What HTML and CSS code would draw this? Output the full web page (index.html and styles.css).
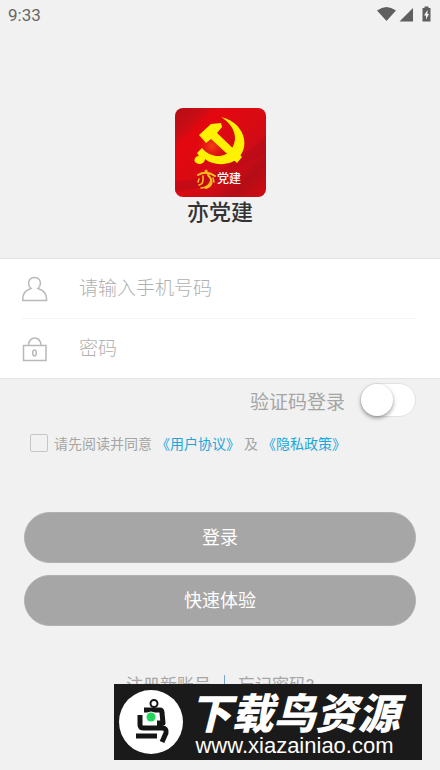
FILE: index.html
```html
<!DOCTYPE html>
<html lang="zh-CN">
<head>
  <meta charset="UTF-8">
  <meta name="viewport" content="width=device-width, initial-scale=1.0">
  <title>亦党建</title>
  <link rel="stylesheet" href="styles.css">
</head>
<body>
  <header class="status-bar">
    <span class="status-time">9:33</span>
    <svg class="status-icons" width="58" height="20" viewBox="0 0 58 20" fill="#5f5f5f" aria-hidden="true">
      <path d="M0 5.500Q9.500 -1.500 19 5.500L9.500 16Z"/>
      <path d="M22.500 16.500L36 3V16.500Z"/>
      <path d="M45.500 3H47.500V1.500H51.500V3H53.500V16.500H45.500Z"/>
      <path fill="#f1f1f1" d="M50.500 5L47 10.500H49V14.500L52 9H50.500Z"/>
    </svg>
  </header>

  <main>
    <div class="brand">
      <svg class="brand-logo" width="91" height="89" viewBox="0 0 91 89" aria-hidden="true">
        <defs>
          <linearGradient id="flag" x1="0" y1="0" x2="1" y2="1">
            <stop offset="0" stop-color="#b70c15"/>
            <stop offset=".16" stop-color="#c80d16"/>
            <stop offset=".24" stop-color="#e5070f"/>
            <stop offset=".5" stop-color="#d90a13"/>
            <stop offset=".68" stop-color="#cc0c16"/>
            <stop offset=".8" stop-color="#b30d17"/>
            <stop offset="1" stop-color="#d10a13"/>
          </linearGradient>
          <radialGradient id="glow">
            <stop offset="0" stop-color="#ff6a18" stop-opacity=".6"/>
            <stop offset="1" stop-color="#e5070f" stop-opacity="0"/>
          </radialGradient>
        </defs>
        <rect width="91" height="89" rx="8" fill="url(#flag)"/>
        <path d="M0 73Q32 73 57 55T91 28V45Q72 53 54 66T0 84Z" fill="#a90c18" opacity=".4"/>
        <circle cx="37" cy="38" r="17" fill="url(#glow)"/>
        <g fill="#fff200">
          <path d="M46 9C74 16 76 46 57 54C47 58 36 56 30 51C30 54 27 56 24 56C17 55 19 48 24 48L22 45L27 40C34 49 48 51 55 43C65 31 59 17 46 9Z"/>
          <path d="M24 27L36 16L46 15L47 19L42 25L67 49L62 55L36 31L31 35Z"/>
        </g>
        <g fill="none" stroke="#ffc21c" stroke-linecap="round">
          <path stroke-width="2" d="M23 67Q31 62 40 68M33 67Q41 76 31 80"/>
          <path stroke-width="1.500" d="M28 68V72Q28 76 24 77M24 71L23 74M38 70L39 74M26 80Q34 80 36 72"/>
          <circle cx="31" cy="63" r="1" fill="#ffc21c"/>
        </g>
        <text class="logo-text" x="42" y="75">党建</text>
      </svg>
      <h1 class="brand-name">亦党建</h1>
    </div>

    <form>
      <div class="fields">
        <div class="field">
          <label for="phone" aria-label="手机号码">
            <svg width="26" height="26" viewBox="0 0 26 26">
              <path d="M9 12.500C5 9 6 1.500 12.500 1.500S20 9 16 12.500C21 14 25 18 24.500 24.500H.800C.300 18 4 14 9 12.500Z"/>
            </svg>
          </label>
          <input type="tel" id="phone" placeholder="请输入手机号码">
        </div>
        <div class="field">
          <label for="password" aria-label="密码">
            <svg width="26" height="26" viewBox="0 0 26 26">
              <path d="M1.500 9.500H24V24.500H1.500ZM6.500 9.500C6.500 -.500 19 -.500 19 9.500"/>
              <ellipse cx="12.500" cy="17" rx="1.800" ry="3"/>
            </svg>
          </label>
          <input type="password" id="password" placeholder="密码">
        </div>
      </div>

      <div class="code-login">
        <label for="codeLogin">验证码登录</label>
        <input type="checkbox" role="switch" class="switch" id="codeLogin">
      </div>

      <div class="agreement">
        <input type="checkbox" class="agree-box" id="agree">
        <p><label for="agree">请先阅读并同意</label><a href="#">《用户协议》</a>及<a href="#">《隐私政策》</a></p>
      </div>

      <div class="actions">
        <button type="submit">登录</button>
        <button type="button">快速体验</button>
      </div>
    </form>

    <nav class="links">
      <a href="#">注册新账号</a>
      <span class="separator"></span>
      <a href="#">忘记密码?</a>
    </nav>
  </main>

  <aside class="site-banner">
    <svg width="64" height="64" viewBox="0 0 64 64" aria-hidden="true">
      <circle cx="32" cy="32" r="32" fill="#fff"/>
      <g fill="none" stroke="#151515" stroke-linejoin="round">
        <circle cx="35" cy="13.500" r="3.500" stroke-width="2"/>
        <path stroke-width="5" d="M25 20H41Q43 20 43 23L44 33H38M21 25V35Q21 38 25 38H43Q48 38 47 43L43 52M17 46H38"/>
      </g>
      <circle cx="32" cy="27" r="5.500" fill="#fff"/>
      <circle cx="32" cy="27" r="4.500" fill="#20d85a"/>
    </svg>
    <div class="banner-text">
      <strong>下载鸟资源</strong>
      <span>www.xiazainiao.com</span>
    </div>
  </aside>
</body>
</html>
```
FILE: styles.css
```css
* {
  margin: 0;
  padding: 0;
  box-sizing: border-box;
}

body {
  position: relative;
  min-height: 100vh;
  background: #f1f1f1;
  color: #a5a5a5;
  font-family: Roboto, "Noto Sans CJK SC", sans-serif;
  font-size: 14px;
}

a {
  color: inherit;
  text-decoration: none;
}

svg {
  display: block;
  flex: none;
}

.status-bar {
  height: 30px;
  padding: 0 5px 0 8px;
  display: flex;
  align-items: center;
  justify-content: space-between;
}

.status-time {
  color: #666;
  font-size: 17px;
}

.brand {
  padding-top: 78px;
  height: 228px;
  display: flex;
  flex-direction: column;
  align-items: center;
}

.logo-text {
  fill: #fff;
  font-size: 12px;
  font-weight: 500;
}

.brand-name {
  color: #333;
  font-size: 22px;
  line-height: 32px;
  font-weight: 500;
}

.fields {
  padding: 0 24px 0 22px;
  background: #fff;
  border-top: 1px solid #e2e5e8;
  border-bottom: 1px solid #e5e5e5;
}

.field {
  height: 59px;
  display: flex;
  align-items: center;
  gap: 31px;
}

.field + .field {
  height: 60px;
  border-top: 1px solid #f0f4f5;
}

.field svg {
  fill: none;
  stroke: #b9b9b9;
  stroke-width: 1.5;
}

.field input {
  flex: 1;
  min-width: 0;
  height: 40px;
  border: none;
  outline: none;
  background: transparent;
  color: #666;
  font-family: inherit;
  font-size: 19px;
  font-weight: 300;
}

.field input::placeholder {
  color: #b0b0b0;
}

.code-login {
  height: 42px;
  padding: 0 24px;
  display: flex;
  align-items: center;
  justify-content: flex-end;
  gap: 15px;
  font-size: 19px;
}

.switch {
  appearance: none;
  width: 56px;
  height: 34px;
  border: 1px solid #e2e2e2;
  border-radius: 17px;
  background: #fff;
}

.switch::before {
  content: "";
  display: block;
  width: 32px;
  height: 32px;
  border-radius: 50%;
  background: #fff;
  box-shadow: 0 2px 4px rgba(0, 0, 0, 0.4);
}

.switch:checked::before {
  margin-left: auto;
}

.agreement {
  height: 44px;
  padding: 0 30px;
  display: flex;
  align-items: center;
  gap: 6px;
}

.agreement p {
  display: flex;
  gap: 4px;
}

.agreement a {
  color: #1ba6dc;
}

.agree-box {
  appearance: none;
  width: 18px;
  height: 18px;
  border: 1px solid #c5c5c5;
  border-radius: 2px;
}

.agree-box:checked {
  background: #1ba6dc;
}

.actions {
  padding: 47px 24px 0;
  display: flex;
  flex-direction: column;
  gap: 12px;
}

.actions button {
  height: 51px;
  padding-bottom: 4px;
  border: 1px solid #b0b0b0;
  border-radius: 26px;
  background: #a6a6a6;
  color: #fff;
  font-family: inherit;
  font-size: 18px;
}

.links {
  padding-top: 45px;
  display: flex;
  align-items: center;
  justify-content: center;
  gap: 13px;
  font-size: 17px;
}

.separator {
  width: 1px;
  height: 18px;
  background: #7aa5c8;
}

/* banner lies over the bottom of the page */
.site-banner {
  position: absolute;
  right: 18px;
  bottom: 10px;
  width: 308px;
  height: 76px;
  padding: 0 18px 0 5px;
  display: flex;
  align-items: center;
  gap: 2px;
  background: #1a1a1a;
  color: #fff;
}

.banner-text {
  flex: 1;
  padding-top: 6px;
  display: flex;
  flex-direction: column;
  align-items: center;
}

.banner-text strong {
  font-size: 42px;
  line-height: 42px;
  font-weight: 900;
  font-style: italic;
}

.banner-text span {
  font-family: "Liberation Sans", sans-serif;
  font-size: 22px;
  line-height: 20px;
}
```
